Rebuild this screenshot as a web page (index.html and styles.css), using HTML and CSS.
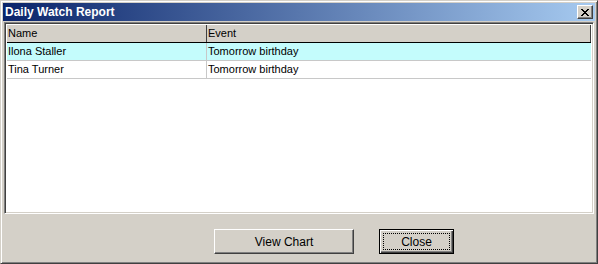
FILE: index.html
```html
<!DOCTYPE html>
<html lang="en">
<head>
    <meta charset="UTF-8">
    <title>Daily Watch Report</title>
    <link rel="stylesheet" href="styles.css">
</head>
<body>
<div class="window">
    <div class="titlebar">
        <span class="title">Daily Watch Report</span>
        <button class="close-x">
            <svg width="8" height="7" viewBox="0 0 8 7">
                <path d="M0 0h2v1h1v1h2v-1h1v-1h2v1h-1v1h-1v1h-1v1h1v1h1v1h1v1h-2v-1h-1v-1h-2v1h-1v1h-2v-1h1v-1h1v-1h1v-1h-1v-1h-1v-1h-1z" fill="#000"/>
            </svg>
        </button>
    </div>

    <div class="list">
        <div class="list-head">
            <div class="col col-name">Name</div>
            <div class="col col-event">Event</div>
        </div>
        <div class="row highlight">
            <div class="col col-name">Ilona Staller</div>
            <div class="col col-event">Tomorrow birthday</div>
        </div>
        <div class="row">
            <div class="col col-name">Tina Turner</div>
            <div class="col col-event">Tomorrow birthday</div>
        </div>
    </div>

    <!-- Кнопки внизу -->
    <div class="buttons">
        <button class="button wide">View Chart</button>
        <button class="button default"><span class="focus">Close</span></button>
    </div>
</div>
</body>
</html>
```

FILE: styles.css
```css
body {
    margin: 0;
    font-family: "Liberation Sans", Arial, sans-serif;
    font-size: 11px;
    background-color: #d4d0c8;
}

.window {
    box-sizing: border-box;
    width: 598px;
    height: 264px;
    background-color: #d4d0c8;
    border: 1px solid;
    border-color: #d4d0c8 #404040 #404040 #d4d0c8;
    box-shadow: inset 1px 1px #ffffff, inset -1px -1px #808080;
    padding: 2px;
    display: flex;
    flex-direction: column;
}

.titlebar {
    height: 18px;
    background: linear-gradient(to right, #0a246a, #a6caf0);
    display: flex;
    align-items: center;
    justify-content: space-between;
    padding: 0 2px 0 2px;
}

.title {
    color: #ffffff;
    font-weight: bold;
    font-size: 12px;
}

.close-x {
    box-sizing: border-box;
    width: 16px;
    height: 14px;
    padding: 0;
    background-color: #d4d0c8;
    border: 1px solid;
    border-color: #ffffff #404040 #404040 #ffffff;
    box-shadow: inset -1px -1px #808080;
    display: flex;
    align-items: center;
    justify-content: center;
}

.list {
    box-sizing: border-box;
    height: 192px;
    margin: 1px 1px 0 1px;
    background-color: #ffffff;
    border: 1px solid;
    border-color: #808080 #ffffff #ffffff #808080;
    box-shadow: inset 1px 1px #404040, inset -1px -1px #d4d0c8;
    padding: 2px 2px 0 2px;
}

.list-head {
    display: flex;
    height: 17px;
    background-color: #d4d0c8;
    border-bottom: 1px solid #000000;
}

.row {
    display: flex;
    height: 17px;
    border-bottom: 1px solid #c8c8c8;
}

.row.highlight {
    background-color: #c4fcfc;
}

.col {
    box-sizing: border-box;
    padding: 0 2px 0 1px;
    line-height: 17px;
    white-space: nowrap;
    color: #000000;
}

.col-name {
    width: 200px;
    border-right: 1px solid #c8c8c8;
}

.col-event {
    flex: 1;
}

.list-head .col-name {
    border-right: 1px solid #404040;
}

.list-head .col-event {
    border-right: 1px solid #404040;
}

.buttons {
    flex: 1;
    display: flex;
    align-items: flex-start;
    gap: 25px;
    padding-left: 211px;
    padding-top: 15px;
}

.button {
    box-sizing: border-box;
    height: 25px;
    width: 75px;
    font-family: "Liberation Sans", Arial, sans-serif;
    font-size: 12px;
    color: #000000;
    background-color: #d4d0c8;
    border: 1px solid;
    border-color: #ffffff #404040 #404040 #ffffff;
    box-shadow: inset -1px -1px #808080;
    padding: 0;
}

.button.wide {
    width: 140px;
}

.button.default {
    border: 1px solid #000000;
    box-shadow: inset 1px 1px #ffffff, inset -1px -1px #404040, inset -2px -2px #808080;
    padding: 3px;
}

.focus {
    display: flex;
    align-items: center;
    justify-content: center;
    height: 100%;
    border: 1px dotted #000000;
    box-sizing: border-box;
}
```
